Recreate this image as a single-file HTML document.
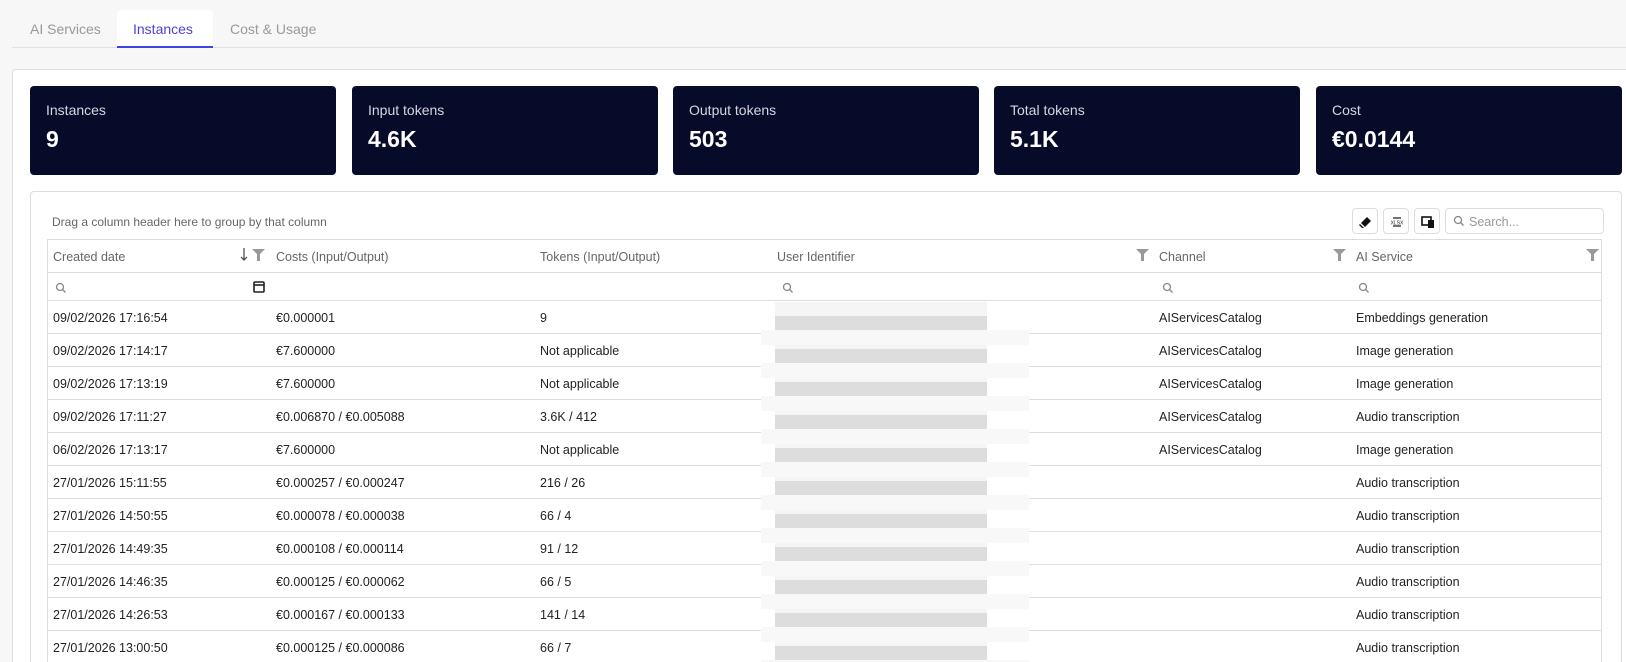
<!DOCTYPE html>
<html><head><meta charset="utf-8"><style>
*{box-sizing:border-box;margin:0;padding:0}
html,body{width:1626px;height:662px;overflow:hidden}
body{background:#f7f7f7;font-family:"Liberation Sans",sans-serif;color:#222}
#w{position:relative;width:1626px;height:662px;overflow:hidden}
.a{position:absolute}
.tab{position:absolute;top:10px;height:38px;font-size:14px;color:#999;line-height:38px}
.stat{position:absolute;top:86px;height:89px;width:306px;background:#060b2a;border-radius:4px;color:#fff}
.stat .l{position:absolute;left:16px;top:16px;font-size:14px;color:#d4d6e0}
.stat .v{position:absolute;left:16px;top:40px;font-size:23px;font-weight:bold}
.row{position:absolute;left:47px;width:1555px;height:33px;border-bottom:1px solid #ddd;font-size:12.5px;color:#222}
.row span{position:absolute;top:10px;white-space:nowrap}
.hd{color:#666;font-size:12.5px}
.btn{position:absolute;top:208px;width:26px;height:26px;border:1px solid #ddd;border-radius:4px;background:#fff}
.lb{position:absolute;left:761px;width:268px;height:15px;background:#f8f8f8}
</style></head><body><div id="w">
<div class="a" style="left:12px;top:47px;width:1614px;height:1px;background:#dfe0e8"></div>
<div class="tab" style="left:30px">AI Services</div>
<div class="a" style="left:117px;top:10px;width:96px;height:38px;background:#fff;border-radius:4px 4px 0 0"></div>
<div class="tab" style="left:133px;color:#4b3fd6">Instances</div>
<div class="a" style="left:117px;top:46px;width:96px;height:2px;background:#3f43e0"></div>
<div class="tab" style="left:230px">Cost &amp; Usage</div>

<div class="a" style="left:12px;top:69px;width:1614px;height:593px;background:#fff;border:1px solid #ddd;border-right:none;border-bottom:none;border-radius:4px 0 0 0"></div>

<div class="stat" style="left:30px"><div class="l">Instances</div><div class="v">9</div></div>
<div class="stat" style="left:352px"><div class="l">Input tokens</div><div class="v">4.6K</div></div>
<div class="stat" style="left:673px"><div class="l">Output tokens</div><div class="v">503</div></div>
<div class="stat" style="left:994px"><div class="l">Total tokens</div><div class="v">5.1K</div></div>
<div class="stat" style="left:1316px"><div class="l">Cost</div><div class="v">€0.0144</div></div>

<div class="a" style="left:30px;top:191px;width:1592px;height:471px;border:1px solid #ddd;border-bottom:none;border-radius:4px 4px 0 0"></div>
<div class="a" style="left:52px;top:215px;font-size:12px;color:#666">Drag a column header here to group by that column</div>
<div class="btn" style="left:1352px"><svg width="26" height="26" viewBox="0 0 26 26"><path d="M8 14l6-6 4 4-6 6z" fill="#111"/><path d="M7 15l4 4-2 0-3-3z" fill="#111"/></svg></div>
<div class="btn" style="left:1383px"><svg width="26" height="26" viewBox="0 0 26 26"><path d="M9 9h8M9 17h8" stroke="#222" stroke-width="1.2"/><text x="13" y="15.5" font-size="5" text-anchor="middle" font-family="Liberation Sans" fill="#222">XLSX</text></svg></div>
<div class="btn" style="left:1414px"><svg width="26" height="26" viewBox="0 0 26 26"><rect x="7" y="8" width="9" height="8" fill="none" stroke="#111" stroke-width="1.6"/><rect x="13" y="11" width="6" height="8" fill="#111"/></svg></div>
<div class="a" style="left:1445px;top:208px;width:159px;height:26px;border:1px solid #ddd;border-radius:4px;font-size:12.5px;color:#999;padding:6px 0 0 23px">Search...
<svg class="a" style="left:7px;top:6px" width="12" height="12" viewBox="0 0 12 12"><circle cx="5" cy="5" r="3.5" fill="none" stroke="#888" stroke-width="1.3"/><path d="M7.5 7.5l3 3" stroke="#888" stroke-width="1.4"/></svg></div>

<div class="a" style="left:47px;top:239px;width:1555px;height:423px;border:1px solid #ddd;border-bottom:none"></div>
<div class="row hd" style="top:239px;height:34px"><span style="left:6px;top:11px">Created date</span><span style="left:229px;top:11px">Costs (Input/Output)</span><span style="left:493px;top:11px">Tokens (Input/Output)</span><span style="left:730px;top:11px">User Identifier</span><span style="left:1112px;top:11px">Channel</span><span style="left:1309px;top:11px">AI Service</span></div>
<svg class="a" style="left:0;top:0" width="1626" height="300">
<defs><path id="f" d="M0 0h13l-5 5v7h-3v-7z" fill="#999"/></defs>
<path d="M244 248v12M241 257l3 3 3-3" stroke="#444" stroke-width="1.2" fill="none"/>
<use href="#f" x="252" y="249"/><use href="#f" x="1136" y="249"/><use href="#f" x="1333" y="249"/><use href="#f" x="1586" y="249"/>
<g fill="none" stroke="#888" stroke-width="1.3"><circle cx="60" cy="287" r="3.5"/><path d="M62.5 289.5l3 3"/><circle cx="787" cy="287" r="3.5"/><path d="M789.5 289.5l3 3"/><circle cx="1167" cy="287" r="3.5"/><path d="M1169.5 289.5l3 3"/><circle cx="1363" cy="287" r="3.5"/><path d="M1365.5 289.5l3 3"/></g>
<rect x="254" y="282" width="10" height="10" rx="1" fill="none" stroke="#222" stroke-width="1.6"/><path d="M254 285h10" stroke="#222" stroke-width="1.6"/>
</svg>
<div class="row" style="top:273px;height:28px"></div>

<div class="row" style="top:301px"><span style="left:6px">09/02/2026 17:16:54</span><span style="left:229px">€0.000001</span><span style="left:493px">9</span><span style="left:1112px">AIServicesCatalog</span><span style="left:1309px">Embeddings generation</span></div>
<div class="row" style="top:334px"><span style="left:6px">09/02/2026 17:14:17</span><span style="left:229px">€7.600000</span><span style="left:493px">Not applicable</span><span style="left:1112px">AIServicesCatalog</span><span style="left:1309px">Image generation</span></div>
<div class="row" style="top:367px"><span style="left:6px">09/02/2026 17:13:19</span><span style="left:229px">€7.600000</span><span style="left:493px">Not applicable</span><span style="left:1112px">AIServicesCatalog</span><span style="left:1309px">Image generation</span></div>
<div class="row" style="top:400px"><span style="left:6px">09/02/2026 17:11:27</span><span style="left:229px">€0.006870 / €0.005088</span><span style="left:493px">3.6K / 412</span><span style="left:1112px">AIServicesCatalog</span><span style="left:1309px">Audio transcription</span></div>
<div class="row" style="top:433px"><span style="left:6px">06/02/2026 17:13:17</span><span style="left:229px">€7.600000</span><span style="left:493px">Not applicable</span><span style="left:1112px">AIServicesCatalog</span><span style="left:1309px">Image generation</span></div>
<div class="row" style="top:466px"><span style="left:6px">27/01/2026 15:11:55</span><span style="left:229px">€0.000257 / €0.000247</span><span style="left:493px">216 / 26</span><span style="left:1309px">Audio transcription</span></div>
<div class="row" style="top:499px"><span style="left:6px">27/01/2026 14:50:55</span><span style="left:229px">€0.000078 / €0.000038</span><span style="left:493px">66 / 4</span><span style="left:1309px">Audio transcription</span></div>
<div class="row" style="top:532px"><span style="left:6px">27/01/2026 14:49:35</span><span style="left:229px">€0.000108 / €0.000114</span><span style="left:493px">91 / 12</span><span style="left:1309px">Audio transcription</span></div>
<div class="row" style="top:565px"><span style="left:6px">27/01/2026 14:46:35</span><span style="left:229px">€0.000125 / €0.000062</span><span style="left:493px">66 / 5</span><span style="left:1309px">Audio transcription</span></div>
<div class="row" style="top:598px"><span style="left:6px">27/01/2026 14:26:53</span><span style="left:229px">€0.000167 / €0.000133</span><span style="left:493px">141 / 14</span><span style="left:1309px">Audio transcription</span></div>
<div class="row" style="top:631px;height:31px;border-bottom:none"><span style="left:6px">27/01/2026 13:00:50</span><span style="left:229px">€0.000125 / €0.000086</span><span style="left:493px">66 / 7</span><span style="left:1309px">Audio transcription</span></div>

<div class="a" style="left:775px;top:302px;width:212px;height:360px;background:repeating-linear-gradient(#f5f5f5 0 14px,#dddddd 14px 28px,#f8f8f8 28px 33px)"></div>
<div class="lb" style="top:330px"></div>
<div class="lb" style="top:363px;background:repeating-linear-gradient(#f8f8f8 0 15px,transparent 15px 33px);height:299px"></div>
</div></body></html>
